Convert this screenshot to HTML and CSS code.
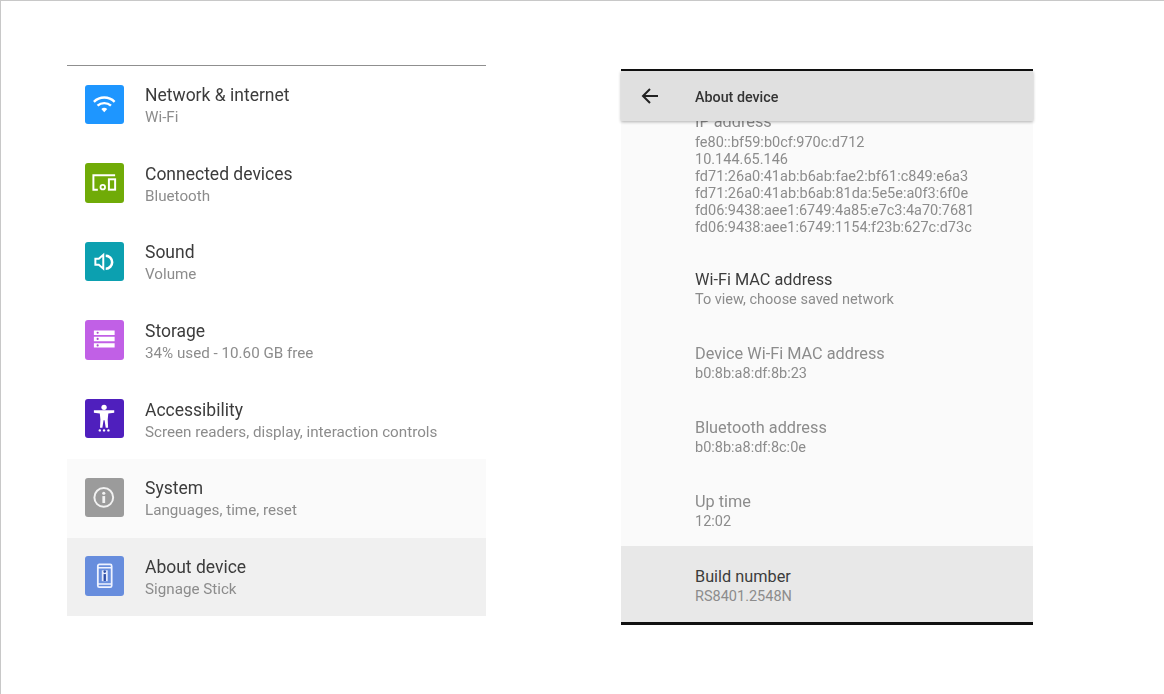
FILE: index.html
```html
<!DOCTYPE html>
<html lang="en">
<head>
<meta charset="utf-8">
<title>Settings</title>
<link rel="stylesheet" href="styles.css">
</head>
<body>
<main class="page">
  <section class="menu">
    <div class="row">
      <span class="tile tile-blue"><svg viewBox="0 0 40 40"><path d="M9 17a15 15 0 0 1 21 0M12.700 21a10 10 0 0 1 13.600 0" fill="none" stroke="#fff" stroke-width="2.400"/><path d="M16.500 24.300a4.500 4.500 0 0 1 6 0L19.500 27.500z" fill="#fff"/></svg></span>
      <div class="text"><div class="title">Network &amp; internet</div><div class="sub">Wi-Fi</div></div>
    </div>
    <div class="row">
      <span class="tile tile-green"><svg viewBox="0 0 40 40"><path d="M30.500 12.300H8.500v14.700h4.500" fill="none" stroke="#fff" stroke-width="2"/><circle cx="18" cy="24.500" r="2.300" fill="none" stroke="#fff" stroke-width="1.800"/><rect x="24.200" y="16.500" width="6.300" height="10.500" fill="none" stroke="#fff" stroke-width="2"/></svg></span>
      <div class="text"><div class="title">Connected devices</div><div class="sub">Bluetooth</div></div>
    </div>
    <div class="row">
      <span class="tile tile-teal"><svg viewBox="0 0 40 40"><path d="M10.500 17v6h3.500l4.500 4v-14l-4.500 4z" fill="none" stroke="#fff" stroke-width="2"/><path d="M21 14a6.500 6.500 0 0 1 0 13" fill="none" stroke="#fff" stroke-width="2.600"/></svg></span>
      <div class="text"><div class="title">Sound</div><div class="sub">Volume</div></div>
    </div>
    <div class="row">
      <span class="tile tile-purple"><svg viewBox="0 0 40 40"><path d="M9 10.700h21v4.400H9zM9 17h21v4.400H9zM9 23.500h21v4.400H9z" fill="#fff"/><circle cx="12.800" cy="12.900" r="1.100" fill="#a94ccb"/><circle cx="12.800" cy="19.200" r="1.100" fill="#a94ccb"/><circle cx="12.800" cy="25.700" r="1.100" fill="#a94ccb"/></svg></span>
      <div class="text"><div class="title">Storage</div><div class="sub">34% used - 10.60 GB free</div></div>
    </div>
    <div class="row">
      <span class="tile tile-indigo"><svg viewBox="0 0 40 40"><circle cx="19.300" cy="8.400" r="2.700" fill="#fff"/><path d="M9 11.500h20.600V14l-6 .8-.6 6 .4 8.200h-2.400l-1.200-7.500h-1l-1.200 7.500h-2.400l.4-8.200-.6-6-6-.8z" fill="#fff"/><circle cx="15" cy="31.800" r="1.200" fill="#fff"/><circle cx="19.300" cy="31.800" r="1.200" fill="#fff"/><circle cx="23.700" cy="31.800" r="1.200" fill="#fff"/></svg></span>
      <div class="text"><div class="title">Accessibility</div><div class="sub">Screen readers, display, interaction controls</div></div>
    </div>
    <div class="row row-soft">
      <span class="tile tile-grey"><svg viewBox="0 0 40 40"><circle cx="19" cy="19.700" r="9.500" fill="none" stroke="#f2f2f2" stroke-width="2"/><circle cx="19" cy="15.400" r="1.600" fill="#f2f2f2"/><path d="M19 18.300v7" stroke="#f2f2f2" stroke-width="2.800"/></svg></span>
      <div class="text"><div class="title">System</div><div class="sub">Languages, time, reset</div></div>
    </div>
    <div class="row row-active">
      <span class="tile tile-periwinkle"><svg viewBox="0 0 40 40"><rect x="13" y="8.500" width="14" height="23" rx="1.500" fill="none" stroke="#eef2ff" stroke-width="1.800"/><path d="M13 11.800h14M13 28.300h14" stroke="#eef2ff" stroke-width="1.500"/><path d="M20 14.500v11" stroke="#e4eafc" stroke-width="6"/><circle cx="20" cy="15.800" r="1.300" fill="#2f4fa8"/><path d="M20 18.300v7" stroke="#2f4fa8" stroke-width="2.400"/></svg></span>
      <div class="text"><div class="title">About device</div><div class="sub">Signage Stick</div></div>
    </div>
  </section>

  <section class="phone">
    <header class="bar">
      <svg class="back" viewBox="0 0 18 18"><path d="M17 9H2.500M9 2L2 9l7 7" fill="none" stroke="#222" stroke-width="2"/></svg>
      <span class="bar-title">About device</span>
    </header>
    <div class="list">
      <div class="cut-label">IP address</div>
      <div class="item item-ip">
        <div class="value">fe80::bf59:b0cf:970c:d712</div>
        <div class="value">10.144.65.146</div>
        <div class="value">fd71:26a0:41ab:b6ab:fae2:bf61:c849:e6a3</div>
        <div class="value">fd71:26a0:41ab:b6ab:81da:5e5e:a0f3:6f0e</div>
        <div class="value">fd06:9438:aee1:6749:4a85:e7c3:4a70:7681</div>
        <div class="value">fd06:9438:aee1:6749:1154:f23b:627c:d73c</div>
      </div>
      <div class="item"><div class="label">Wi-Fi MAC address</div><div class="value">To view, choose saved network</div></div>
      <div class="item"><div class="label label-dim">Device Wi-Fi MAC address</div><div class="value">b0:8b:a8:df:8b:23</div></div>
      <div class="item"><div class="label label-dim">Bluetooth address</div><div class="value">b0:8b:a8:df:8c:0e</div></div>
      <div class="item"><div class="label label-dim">Up time</div><div class="value">12:02</div></div>
    </div>
    <div class="item item-build"><div class="label">Build number</div><div class="value">RS8401.2548N</div></div>
  </section>
</main>
</body>
</html>
```
FILE: styles.css
```css
* { box-sizing: border-box; }
html, body { margin: 0; height: 100%; background: #fff; overflow: hidden; }
body { font-family: Roboto, "Liberation Sans", sans-serif; }

.page {
  width: 1164px;
  height: 694px;
  border-top: 1px solid #c8c8c8;
  border-left: 1px solid #c8c8c8;
  display: flex;
  align-items: flex-start;
  padding: 64px 0 0 66px;
  filter: blur(0.35px);
}

.menu { width: 419px; border-top: 1px solid #8f8f8f; }
.row {
  height: 78.6px;
  display: flex;
  align-items: center;
  padding: 0 0 2px 17.5px;
  gap: 21px;
}
.row-soft { background: #fafafa; }
.row-active { background: #f0f0f0; }

.tile { width: 39.5px; height: 39.5px; border-radius: 3px; flex: none; display: block; }
.tile svg { width: 100%; height: 100%; display: block; }
.tile-blue { background: #1e96ff; }
.tile-green { background: #70ab07; }
.tile-teal { background: #0ca0b0; }
.tile-purple { background: #c160e6; }
.tile-indigo { background: #4f1fbd; }
.tile-grey { background: #9b9b9b; }
.tile-periwinkle { background: #678ddd; }

.text { margin-top: 3px; }
.title { font-size: 17.5px; line-height: 22px; margin-bottom: 1px; color: #3c3c3c; }
.sub { font-size: 15.2px; line-height: 20px; color: #8c8c8c; }

.phone {
  width: 412px;
  height: 556.5px;
  margin: 3.5px 0 0 135px;
  border-top: 2.5px solid #111;
  border-bottom: 3px solid #111;
  background: #fafafa;
  display: flex;
  flex-direction: column;
}
.bar {
  flex: none;
  height: 50px;
  background: #e0e0e0;
  box-shadow: 0 1px 3px rgba(0, 0, 0, 0.3);
  display: flex;
  align-items: center;
  padding-left: 20px;
  gap: 36px;
  position: relative;
  z-index: 1;
}
.back { width: 18px; height: 18px; flex: none; }
.bar-title { font-size: 14.3px; font-weight: 500; color: #333; margin-top: 2px; }

.list { flex: 1; overflow: hidden; padding-left: 74px; }
.cut-label { font-size: 16.3px; line-height: 20px; color: #8a8a8a; margin-top: -8.5px; height: 20px; }
.item { height: 74px; padding-top: 2px; }
.item-ip { height: 136px; padding-top: 3px; }
.item-ip .value { line-height: 16.9px; }
.label { font-size: 16.3px; line-height: 20px; color: #3c3c3c; }
.label-dim { color: #8c8c8c; }
.value { font-size: 14.5px; line-height: 20px; color: #8c8c8c; }
.item-build { flex: none; height: 76px; background: #e8e8e8; padding: 21px 0 0 74px; }
```
